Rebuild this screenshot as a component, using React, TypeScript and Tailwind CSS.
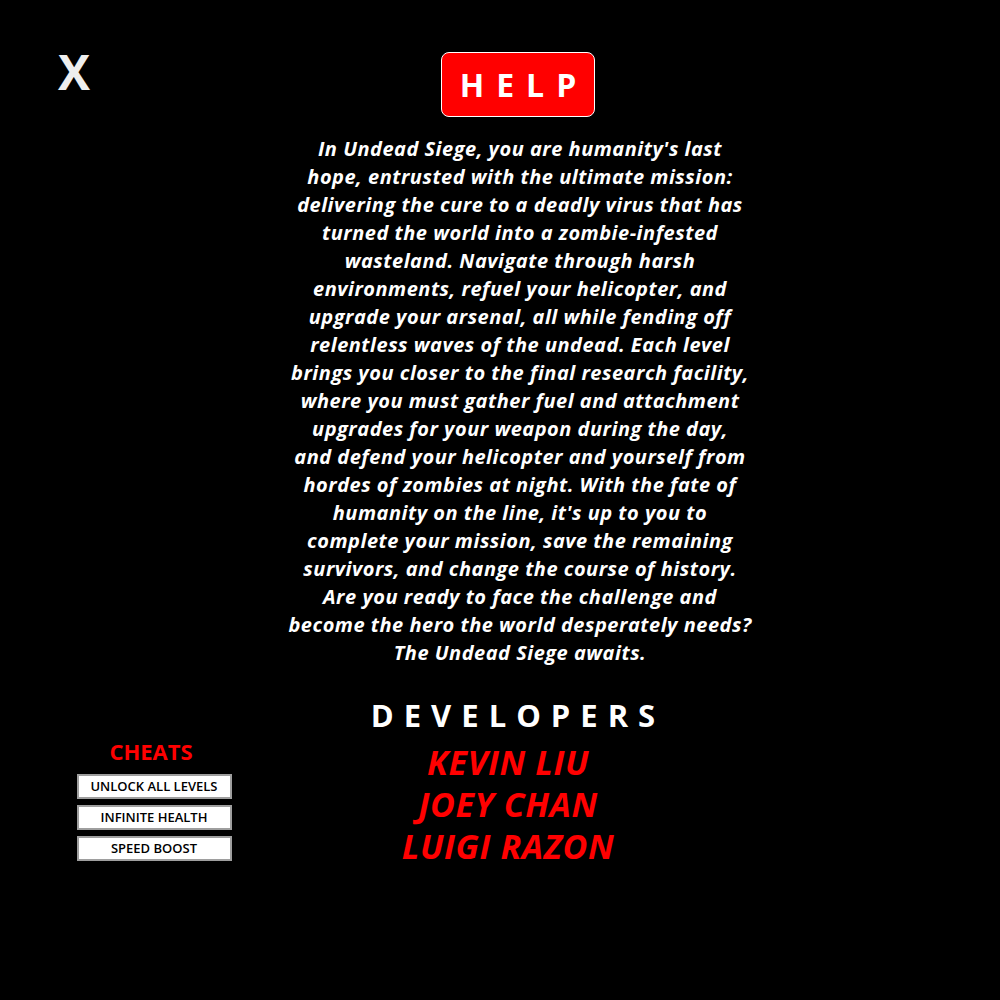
import React from 'react'

// line breaks follow the original layout
const storyLines = [
  "In Undead Siege, you are humanity's last",
  'hope, entrusted with the ultimate mission:',
  'delivering the cure to a deadly virus that has',
  'turned the world into a zombie-infested',
  'wasteland. Navigate through harsh',
  'environments, refuel your helicopter, and',
  'upgrade your arsenal, all while fending off',
  'relentless waves of the undead. Each level',
  'brings you closer to the final research facility,',
  'where you must gather fuel and attachment',
  'upgrades for your weapon during the day,',
  'and defend your helicopter and yourself from',
  'hordes of zombies at night. With the fate of',
  "humanity on the line, it's up to you to",
  'complete your mission, save the remaining',
  'survivors, and change the course of history.',
  'Are you ready to face the challenge and',
  'become the hero the world desperately needs?',
  'The Undead Siege awaits.',
]

const cheats = ['UNLOCK ALL LEVELS', 'INFINITE HEALTH', 'SPEED BOOST']
const developers = ['KEVIN LIU', 'JOEY CHAN', 'LUIGI RAZON']

export default function App() {
  return (
    <div
      className="w-[1000px] h-[1000px] bg-black text-white grid grid-cols-[290px_460px_1fr] grid-rows-[auto_1fr]"
      style={{ fontFamily: '"Open Sans", "Noto Sans", sans-serif' }}
    >
      {/* Left: close button */}
      <div className="pl-[58px] pt-[48px]">
        <button type="button" className="text-[48px] leading-none font-bold text-[#eeeeee]">
          X
        </button>
      </div>

      {/* Center: help + story */}
      <div className="flex flex-col items-center pt-[52px]">
        <div className="w-[154px] h-[65px] -ml-[4px] flex items-center justify-center bg-[#ff0000] border border-white rounded-lg">
          <span className="text-[32px] font-bold tracking-[12px] pl-[12px] leading-none">HELP</span>
        </div>
        <p className="mt-[18px] text-center italic font-bold text-[20px] tracking-[0.5px] leading-[28px] whitespace-nowrap">
          {storyLines.map((l) => (
            <span key={l} className="block">
              {l}
            </span>
          ))}
        </p>
      </div>
      <div />

      {/* Left: cheats */}
      <div className="flex flex-col items-center w-[308px] pt-[73px]">
        <div className="text-[#ff0000] font-bold text-[22px] leading-none -ml-[6px]">CHEATS</div>
        <div className="mt-[12px] flex flex-col gap-[6px]">
          {cheats.map((c) => (
            <button
              key={c}
              type="button"
              className="w-[155px] h-[25px] bg-white border-2 border-[#9e9e9e] text-black text-[13px] font-semibold leading-none"
            >
              {c}
            </button>
          ))}
        </div>
      </div>

      {/* Center: developers */}
      <div className="flex flex-col items-center pt-[33px]">
        <div className="text-[31px] font-bold tracking-[10px] leading-none pl-[10px] -ml-[14px]">DEVELOPERS</div>
        <div className="mt-[10px] flex flex-col items-center pr-[24px]">
          {developers.map((d) => (
            <div key={d} className="text-[#ff0000] italic font-bold text-[34px] tracking-[0.6px] leading-[42px]">
              {d}
            </div>
          ))}
        </div>
      </div>
      <div />
    </div>
  )
}
